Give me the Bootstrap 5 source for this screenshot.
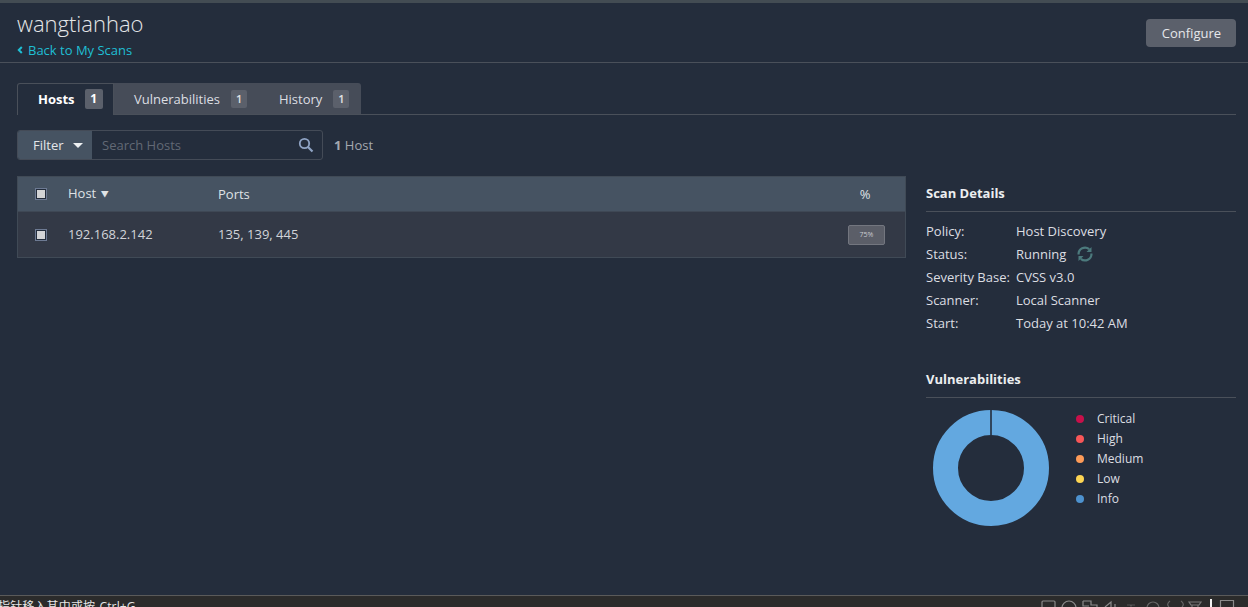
<!DOCTYPE html>
<html lang="en">
<head>
<meta charset="utf-8">
<title>wangtianhao</title>
<link rel="stylesheet" href="https://cdn.jsdelivr.net/npm/bootstrap@5.3.0/dist/css/bootstrap.min.css">
<style>
html,body{height:607px;overflow:hidden}
body{background:#242d3c;color:#d8dade;font-family:"Open Sans","Noto Sans CJK SC",sans-serif;font-size:13px;line-height:18px}
.top-strip{height:3px;background:#434c53}
.page-head{height:60px;border-bottom:1px solid #4a505a;padding:0 12px 0 17px}
.page-title{font-size:22px;font-weight:300;line-height:30px;margin:5px 0 0;color:#e4e6e8}
.back-link{color:#1fbfd4;text-decoration:none;display:flex;align-items:center;gap:5px;margin-top:3px;line-height:18px;font-size:13px}
.cfg-btn{background:#5b606b;color:#e6e7ea;border:0;border-radius:4px;width:90px;height:28px;font-size:13px;padding:0 0 0 1px;margin-top:16px;line-height:28px}
.content-area{padding:20px 12px 0 17px}
.scan-tabs{height:32px;border-bottom:1px solid #4a505a;flex-wrap:nowrap}
.scan-tab{height:31px;display:flex;align-items:center;background:#464c58;color:#dcdee2;padding-left:20px;line-height:18px}
.scan-tab-on{width:97px;background:#242d3c;color:#fff;font-weight:700;border:1px solid #4a505a;border-bottom:0;border-radius:3px 0 0 0;padding-left:20px;padding-bottom:1px;height:32px}
.tab-a{width:147px}
.tab-b{width:100px;padding-left:18px;border-radius:0 3px 0 0}
.tab-count{display:inline-block;width:16px;height:18px;line-height:18px;text-align:center;background:#5b606b;border-radius:2px;font-size:11px;color:#e0e2e5;font-weight:600;margin-left:11px}
.scan-tab-on .tab-count{width:18px;height:20px;line-height:20px;margin-left:10px;color:#fff;font-weight:700;font-size:12px}
.filter-row{margin-top:15px;height:30px;gap:11px}
.filter-box{width:306px;height:30px;border:1px solid #444b57;border-radius:3px;overflow:hidden}
.filter-btn{width:74px;height:100%;background:#465362;color:#e4e6e9;padding-left:15px;gap:9px}
.caret-d{width:0;height:0;border-left:5px solid transparent;border-right:5px solid transparent;border-top:5px solid #eef0f2}
.filter-ph{color:#626975;padding-left:10px}
.count-txt{color:#a4a8b0}
.count-txt b{color:#a4a8b0}
.main-split{margin-top:16px;gap:20px}
.hosts-panel{width:889px;height:82px;border:1px solid #404a56}
.hosts-head{height:34px;background:#465362;color:#dfe2e5}
.hosts-row{height:46px;background:#333946;color:#d2d4d9;border-top:1px solid #3f4855}
.cell-check{width:50px;padding-left:18px}
.cell-host{width:150px}
.cell-ports{width:621px}
.cell-pct{width:55px;text-align:center}
.hd-host{margin-top:-2px}
.row-txt{margin-top:-2px}
.pct-head{padding-right:3px}
.sort-mark{font-size:8px;vertical-align:1px;margin-left:1px}
.chk{display:block;width:10px;height:10px;background:#d3d4d6;border:1px solid #242d3c;outline:1px solid #6d7a93}
.pct-chip{display:block;width:37px;height:20px;background:#5b5e68;border:1px solid #73767f;border-radius:2px;font-size:7px;line-height:18px;color:#c9cbd0;text-align:center;margin:0 auto}
.side-panel{width:310px}
.side-title{font-weight:700;color:#eceef0;height:36px;padding-top:8px;border-bottom:1px solid #4a505a;line-height:18px}
.detail-list{padding-top:7px;margin:0}
.detail-row{height:23px;display:flex;align-items:center;color:#dcdee2}
.detail-key{width:90px;flex:none}
.spin-ic{margin-left:11px}
.vuln-title{margin-top:36px;height:28px;padding-top:0}
.vuln-body{margin-top:11px;height:118px}
.donut{margin-left:7px;flex:none}
.legend-list{margin:0 0 0 27px;padding:0;list-style:none;font-size:12px}
.legend-list li{height:20px;display:flex;align-items:center;color:#dcdee2}
.dot{width:8px;height:8px;border-radius:50%;margin-right:13px}
.status-bar{height:12px;margin-top:auto;background:#2b2b2b;border-top:1px solid #5a5a5a;overflow:hidden;position:relative;color:#e6e6e6;font-size:12px;line-height:18px;white-space:nowrap}
.status-text{margin:2px 0 0 -2px;word-spacing:1px;letter-spacing:.15px}
.status-icons{position:absolute;right:0;top:0}
</style>
</head>
<body class="d-flex flex-column">
<div class="top-strip"></div>
<header class="page-head d-flex justify-content-between">
  <div>
    <h1 class="page-title">wangtianhao</h1>
    <a class="back-link" href="#"><svg width="6" height="8" viewBox="0 0 6 8"><path d="M4.8 1 1.8 4l3 3" fill="none" stroke="#1fbfd4" stroke-width="2"/></svg>Back to My Scans</a>
  </div>
  <button class="cfg-btn" type="button">Configure</button>
</header>
<main class="content-area">
  <div class="scan-tabs d-flex">
    <div class="scan-tab-on d-flex align-items-center">Hosts<span class="tab-count">1</span></div>
    <div class="scan-tab tab-a">Vulnerabilities<span class="tab-count">1</span></div>
    <div class="scan-tab tab-b">History<span class="tab-count">1</span></div>
  </div>
  <div class="filter-row d-flex align-items-center">
    <div class="filter-box d-flex align-items-center">
      <div class="filter-btn d-flex align-items-center">Filter<span class="caret-d"></span></div>
      <div class="filter-ph flex-grow-1">Search Hosts</div>
      <svg class="me-2" width="16" height="16" viewBox="0 0 16 16"><circle cx="6.5" cy="6.5" r="4.7" fill="none" stroke="#8fa3c4" stroke-width="1.8"/><path d="m10 10 4.500 4.500" stroke="#8fa3c4" stroke-width="2.2"/></svg>
    </div>
    <div class="count-txt"><b>1</b> Host</div>
  </div>
  <div class="main-split d-flex align-items-start">
    <div class="hosts-panel">
      <div class="hosts-head d-flex align-items-center">
        <div class="cell-check"><span class="chk"></span></div>
        <div class="cell-host hd-host">Host <span class="sort-mark">▼</span></div>
        <div class="cell-ports">Ports</div>
        <div class="cell-pct pct-head">%</div>
      </div>
      <div class="hosts-row d-flex align-items-center">
        <div class="cell-check"><span class="chk"></span></div>
        <div class="cell-host row-txt">192.168.2.142</div>
        <div class="cell-ports row-txt">135, 139, 445</div>
        <div class="cell-pct"><span class="pct-chip">75%</span></div>
      </div>
    </div>
    <aside class="side-panel">
      <div class="side-title">Scan Details</div>
      <div class="detail-list">
        <div class="detail-row"><span class="detail-key">Policy:</span>Host Discovery</div>
        <div class="detail-row"><span class="detail-key">Status:</span>Running
          <svg class="spin-ic" width="16" height="16" viewBox="0 0 16 16" fill="none" stroke="#4c7a7d" stroke-width="2.2"><path d="M1.6 8.500A6.400 6.400 0 0 1 12.200 3.200"/><path d="M14.400 7.500A6.400 6.400 0 0 1 3.800 12.800"/><path d="M14.500 1v5h-5zM1.500 15v-5h5z" stroke="none" fill="#4c7a7d"/></svg></div>
        <div class="detail-row"><span class="detail-key">Severity Base:</span>CVSS v3.0</div>
        <div class="detail-row"><span class="detail-key">Scanner:</span>Local Scanner</div>
        <div class="detail-row"><span class="detail-key">Start:</span>Today at 10:42 AM</div>
      </div>
      <div class="side-title vuln-title">Vulnerabilities</div>
      <div class="vuln-body d-flex">
        <svg class="donut" width="116" height="118" viewBox="0 0 116 118"><circle cx="58" cy="59" r="45.5" fill="none" stroke="#63a8e0" stroke-width="25"/><path d="M58 0v26" stroke="#242d3c" stroke-width="1.6"/></svg>
        <ul class="legend-list">
          <li><span class="dot" style="background:#c8104a"></span>Critical</li>
          <li><span class="dot" style="background:#f85658"></span>High</li>
          <li><span class="dot" style="background:#fd9b58"></span>Medium</li>
          <li><span class="dot" style="background:#fdd553"></span>Low</li>
          <li><span class="dot" style="background:#4d92cf"></span>Info</li>
        </ul>
      </div>
    </aside>
  </div>
</main>
<footer class="status-bar">
  <div class="status-text">指针移入其中或按 Ctrl+G</div>
  <svg class="status-icons" width="218" height="11" viewBox="0 0 218 11" fill="none" stroke="#8a8a8a" stroke-width="1.2">
    <path d="M12 11V6q0-1 1-1h11q1 0 1 1v5"/><circle cx="39" cy="12" r="7"/><path d="M53 5h8v4h6v2M53 5v5h6"/><path d="M75 11l6-5v5M85 8v3"/><path d="M97 9h8M100 10h2" stroke="#555"/><circle cx="123" cy="12" r="6" stroke="#666"/><path d="M139 11q-3-3 1-6M152 11q3-3-1-6" stroke="#666"/><path d="M159 6h12l-2 3h-8zM162 9v2M168 9v2" stroke="#777"/><path d="M181 3v8" stroke="#f2f2f2" stroke-width="2"/><path d="M190.500 11V4.500h13V11"/>
  </svg>
</footer>
</body>
</html>
